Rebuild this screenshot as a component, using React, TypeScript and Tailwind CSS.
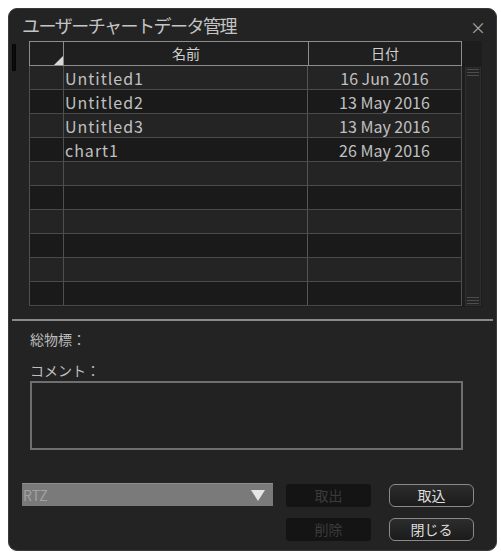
import React from "react";

const rows = [
  { name: "Untitled1", date: "16 Jun 2016" },
  { name: "Untitled2", date: "13 May 2016" },
  { name: "Untitled3", date: "13 May 2016" },
  { name: "chart1", date: "26 May 2016" },
  { name: "", date: "" },
  { name: "", date: "" },
  { name: "", date: "" },
  { name: "", date: "" },
  { name: "", date: "" },
  { name: "", date: "" },
];

const font = { fontFamily: '"Noto Sans CJK JP", "Noto Sans", sans-serif' };

export default function App() {
  return (
    <div className="w-[501px] h-[553px] bg-white pt-[8px] pl-[8px]" style={font}>
      <div className="w-[489px] h-[543px] rounded-[9px] bg-[#232323] border border-[#3a3a3a] flex flex-col overflow-hidden">
        {/* Title */}
        <div className="h-[32px] flex items-center justify-between pl-[13px] pr-[10px] shrink-0">
          <span className="text-[18px] tracking-[-1.5px] leading-none text-[#c4c4c4]">ユーザーチャートデータ管理</span>
          <span className="text-[16px] text-[#a8a8a8] leading-none mt-[4px]">×</span>
        </div>
        {/* Table area */}
        <div className="flex h-[268px] shrink-0">
          <div className="w-[20px] shrink-0 pt-[3px] pl-[3px]">
            <div className="w-[4px] h-[27px] border border-[#050505] bg-[#0c0c0c] rounded-[1px]"></div>
          </div>
          <div className="flex bg-[#1d1d1d] h-[266px]">
            <div className="w-[433px] flex flex-col">
              {/* header */}
              <div className="flex h-[25px] shrink-0 bg-[#1f1f1f]">
                <div className="w-[35px] border border-[#8c8c8c] relative">
                  <div className="absolute right-0 bottom-0 w-0 h-0 border-l-[9px] border-l-transparent border-b-[9px] border-b-[#d8d8d8]"></div>
                </div>
                <div className="w-[244px] border-y border-[#8c8c8c] flex items-center justify-center text-[14px] text-[#cfcfcf]">名前</div>
                <div className="flex-1 border border-[#8c8c8c] flex items-center justify-center text-[14px] text-[#cfcfcf]">日付</div>
              </div>
              {rows.map((r, i) => (
                <div
                  key={i}
                  className={`flex h-[24px] shrink-0 border-b border-[#4a4a4a] ${i % 2 === 0 ? "bg-[#242424]" : "bg-[#1a1a1a]"}`}
                >
                  <div className="w-[35px] border-l border-r border-[#4f4f4f]"></div>
                  <div className="w-[244px] border-r border-[#555] flex items-center pl-[1px] text-[16px] tracking-[1px] text-[#c0c0c0] leading-none">{r.name}</div>
                  <div className="flex-1 border-r border-[#4f4f4f] flex items-center justify-center text-[16px] text-[#c0c0c0] leading-none">{r.date}</div>
                </div>
              ))}
            </div>
            {/* scrollbar */}
            <div className="w-[20px] pt-[26px] pl-[3px] pr-[1px] pb-[1px] flex">
              <div className="flex-1 border border-[#2e2e2e] bg-[#242424] flex flex-col justify-between items-center py-[1px]">
                <div className="w-[12px] h-[7px] border-y border-[#4d4d4d] flex items-center"><div className="w-full h-px bg-[#4d4d4d]"></div></div>
                <div className="w-[12px] h-[7px] border-y border-[#4d4d4d] flex items-center"><div className="w-full h-px bg-[#4d4d4d]"></div></div>
              </div>
            </div>
          </div>
        </div>
        {/* separator */}
        <div className="mt-[10px] mx-[3px] h-[2px] bg-[#8a8a8a] shrink-0"></div>
        {/* labels */}
        <div className="pl-[21px] mt-[8px] text-[14px] text-[#bdbdbd] leading-[20px] shrink-0">総物標：</div>
        <div className="pl-[21px] mt-[11px] text-[14px] text-[#bdbdbd] leading-[20px] shrink-0">コメント：</div>
        <div className="ml-[21px] mt-[1px] w-[433px] h-[69px] border-2 border-[#6f6f6f] bg-[#222] shrink-0"></div>
        {/* bottom controls */}
        <div className="flex mt-[33px] pl-[13px]">
          <div className="w-[251px] h-[23px] bg-[#7a7a7a] border-t border-[#8d8d8d] flex items-center justify-between pl-[1px] pr-[8px]">
            <span className="text-[14px] text-[#a3a3a3] leading-none">RTZ</span>
            <div className="w-0 h-0 border-l-[7px] border-l-transparent border-r-[7px] border-r-transparent border-t-[11px] border-t-[#e6e6e6]"></div>
          </div>
          <div className="flex flex-col gap-[11px] ml-[13px] mt-[1px]">
            <div className="w-[85px] h-[23px] bg-[#141414] rounded-[3px] flex items-center justify-center text-[14px] text-[#3b3b3b]">取出</div>
            <div className="w-[85px] h-[23px] bg-[#141414] rounded-[3px] flex items-center justify-center text-[14px] text-[#3b3b3b]">削除</div>
          </div>
          <div className="flex flex-col gap-[11px] ml-[18px] mt-[1px]">
            <div className="w-[85px] h-[23px] border border-[#8a8a8a] rounded-[6px] bg-gradient-to-b from-[#2d2d2d] to-[#1b1b1b] flex items-center justify-center text-[14px] text-[#dcdcdc]">取込</div>
            <div className="w-[85px] h-[23px] border border-[#8a8a8a] rounded-[6px] bg-gradient-to-b from-[#2d2d2d] to-[#1b1b1b] flex items-center justify-center text-[14px] text-[#dcdcdc]">閉じる</div>
          </div>
        </div>
      </div>
    </div>
  );
}
